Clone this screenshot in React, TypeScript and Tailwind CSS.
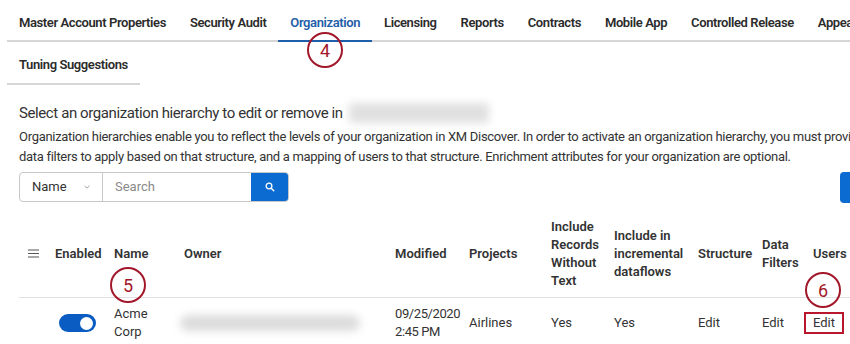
import React from "react";

const tabs = [
  "Master Account Properties",
  "Security Audit",
  "Organization",
  "Licensing",
  "Reports",
  "Contracts",
  "Mobile App",
  "Controlled Release",
  "Appearance",
];

function Circle({ n, className }: { n: string; className: string }) {
  return (
    <div
      className={
        "absolute flex h-[36px] w-[36px] items-center justify-center rounded-full border-2 border-[#a3172a] text-[18px] text-[#a3172a] " +
        className
      }
    >
      {n}
    </div>
  );
}

const cols =
  "grid grid-cols-[36px_59px_70px_211px_74px_82px_63px_84px_64px_51px_60px]";

export default function App() {
  return (
    <div
      className="relative h-[344px] w-[850px] overflow-hidden bg-white text-[#2b2b2b]"
      style={{ fontFamily: "Roboto, 'Liberation Sans', sans-serif" }}
    >
      {/* Tabs */}
      <div className="ml-[7px] flex h-[42px] w-[900px] border-b-2 border-[#d6d6d6]">
        {tabs.map((t) => (
          <div
            key={t}
            className={
              "relative flex shrink-0 items-center whitespace-nowrap px-3 pt-[6px] text-[13px] font-semibold tracking-[-0.4px] " +
              (t === "Organization" ? "text-[#1f5ea8]" : "text-[#2b2b2b]")
            }
          >
            {t}
            {t === "Organization" && (
              <div className="absolute bottom-[-2px] left-0 right-0 h-[2px] bg-[#1f5ea8]" />
            )}
          </div>
        ))}
      </div>
      <div className="ml-[7px] flex h-[43px] w-fit items-center whitespace-nowrap border-b-2 border-[#d6d6d6] px-3 pt-[5px] text-[13px] font-semibold tracking-[-0.4px]">
        Tuning Suggestions
      </div>

      {/* Description */}
      <div className="px-[19px] pt-[17px]">
        <div className="flex h-[22px] items-center text-[15px] tracking-[-0.4px] text-[#333]">
          <span>Select an organization hierarchy to edit or remove in</span>
          <span className="ml-[6px] h-[20px] w-[140px] rounded bg-[#e0e0e0] blur-[4px]" />
        </div>
        <div className="mt-[3px] w-[900px] text-[13px] leading-[20px] tracking-[-0.3px] text-[#333]">
          <div className="whitespace-nowrap">
            Organization hierarchies enable you to reflect the levels of your
            organization in XM Discover. In order to activate an organization
            hierarchy, you must provide
          </div>
          <div className="whitespace-nowrap">
            data filters to apply based on that structure, and a mapping of
            users to that structure. Enrichment attributes for your
            organization are optional.
          </div>
        </div>

        {/* Search row */}
        <div className="mt-[5px] flex h-[30px] w-[900px] items-center">
          <div className="flex h-[30px] w-[270px] overflow-hidden rounded border border-[#c8c8c8]">
            <div className="flex w-[83px] items-center justify-between border-r border-[#c8c8c8] pl-[12px] pr-[12px] text-[13px] text-[#333]">
              <span>Name</span>
              <svg width="6" height="4" viewBox="0 0 6 4">
                <path d="M0.5 0.8 L3 3.2 L5.5 0.8" fill="none" stroke="#999" strokeWidth="0.9" />
              </svg>
            </div>
            <div className="flex flex-1 items-center pl-[12px] text-[13px] text-[#8a8a8a]">
              Search
            </div>
            <div className="flex w-[37px] items-center justify-center bg-[#0b6bd0]">
              <svg width="10" height="10" viewBox="0 0 10 10">
                <circle cx="4" cy="4" r="2.9" fill="none" stroke="white" strokeWidth="1.3" />
                <path d="M6.2 6.2 L8.8 8.8" stroke="white" strokeWidth="1.4" strokeLinecap="round" />
              </svg>
            </div>
          </div>
          <div className="ml-[551px] h-[31px] w-[60px] rounded bg-[#0b6bd0]" />
        </div>
      </div>

      {/* Table */}
      <div className="ml-[19px] mt-[8px] w-[860px]">
        <div
          className={
            cols +
            " h-[88px] items-center border-b border-[#e0e0e0] text-[13px] font-semibold leading-[18px] text-[#333]"
          }
        >
          <div className="pl-[9px]">
            <svg width="11" height="9" viewBox="0 0 11 9">
              <path d="M0 1 H11 M0 4.5 H11 M0 8 H11" stroke="#555" strokeWidth="1.2" />
            </svg>
          </div>
          <div>Enabled</div>
          <div>Name</div>
          <div>Owner</div>
          <div>Modified</div>
          <div>Projects</div>
          <div>
            Include
            <br />
            Records
            <br />
            Without
            <br />
            Text
          </div>
          <div>
            Include in
            <br />
            incremental
            <br />
            dataflows
          </div>
          <div>Structure</div>
          <div>
            Data
            <br />
            Filters
          </div>
          <div>Users</div>
        </div>
        <div
          className={
            cols + " h-[50px] items-center text-[13px] leading-[18px] text-[#333]"
          }
        >
          <div />
          <div className="pl-[4px]">
            <div className="flex h-[18px] w-[37px] items-center justify-end rounded-full bg-[#0b5cc2] pr-[3px]">
              <div className="h-[13px] w-[13px] rounded-full bg-white" />
            </div>
          </div>
          <div>
            Acme
            <br />
            Corp
          </div>
          <div className="pr-[30px]">
            <div className="ml-[-4px] h-[16px] w-[180px] rounded-full bg-[#dcdcdc] blur-[4px]" />
          </div>
          <div className="tracking-[-0.4px]">
            09/25/2020
            <br />
            2:45 PM
          </div>
          <div>Airlines</div>
          <div>Yes</div>
          <div>Yes</div>
          <div>Edit</div>
          <div>Edit</div>
          <div>
            <span className="ml-[-9px] inline-block border-2 border-[#b8172e] px-[7px] leading-[18px]">
              Edit
            </span>
          </div>
        </div>
      </div>

      <Circle n="4" className="left-[307px] top-[32px]" />
      <Circle n="5" className="left-[110px] top-[267px]" />
      <Circle n="6" className="left-[805px] top-[272px]" />
    </div>
  );
}
